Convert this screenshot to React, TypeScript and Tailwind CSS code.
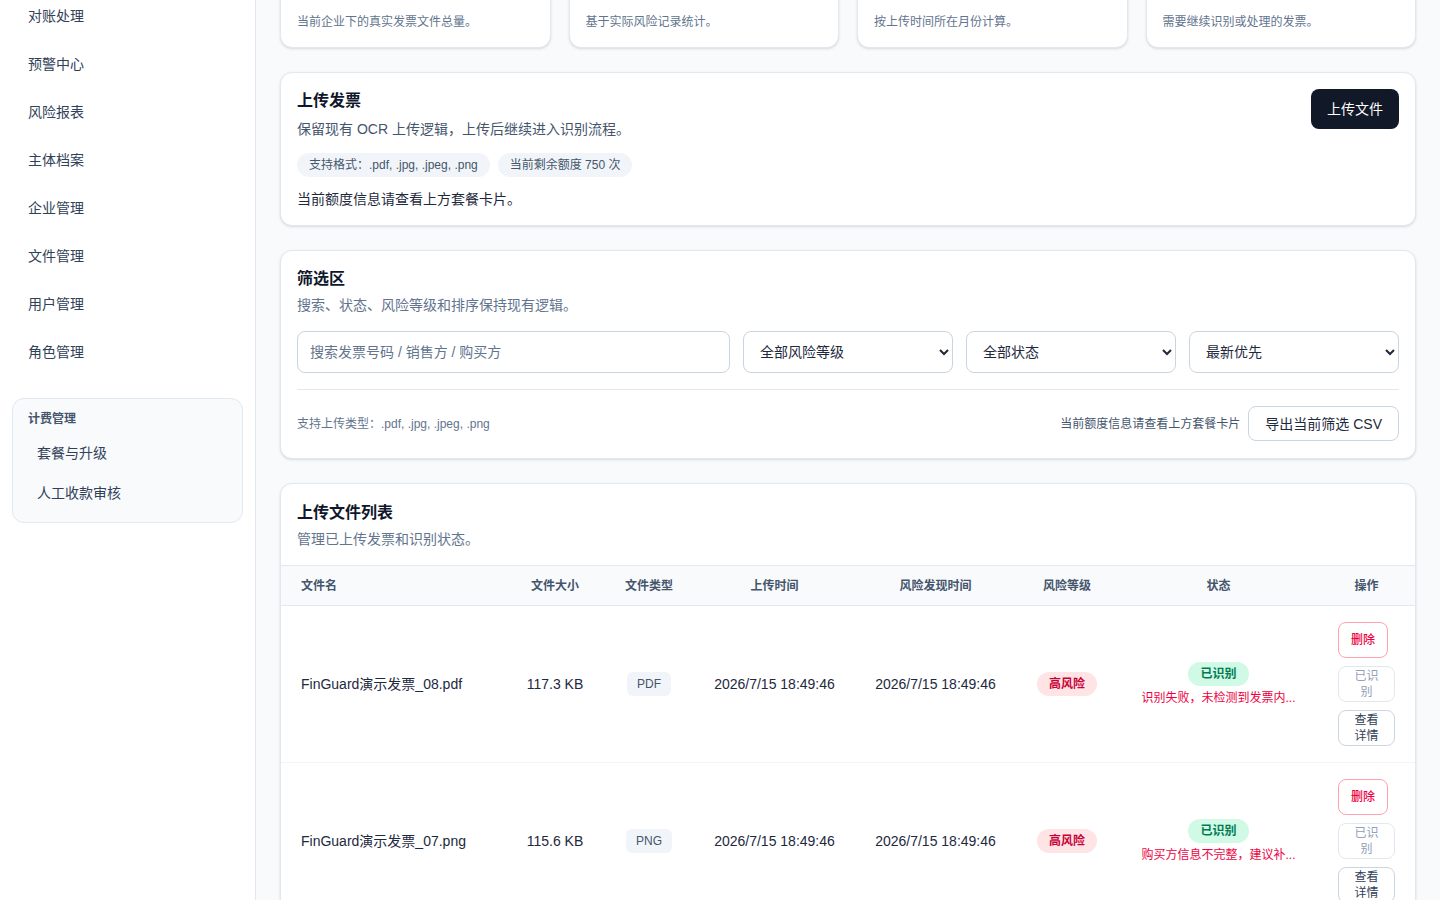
import { ReactNode } from "react";

const navItems = ["对账处理", "预警中心", "风险报表", "主体档案", "企业管理", "文件管理", "用户管理", "角色管理"];

const statNotes = ["当前企业下的真实发票文件总量。", "基于实际风险记录统计。", "按上传时间所在月份计算。", "需要继续识别或处理的发票。"];

const files = [
  { name: "FinGuard演示发票_08.pdf", size: "117.3 KB", type: "PDF", note: "识别失败，未检测到发票内..." },
  { name: "FinGuard演示发票_07.png", size: "115.6 KB", type: "PNG", note: "购买方信息不完整，建议补..." },
];

function Card({ children, className = "" }: { children: ReactNode; className?: string }) {
  return <div className={`rounded-xl border border-slate-200 bg-white shadow-sm ${className}`}>{children}</div>;
}

function Sidebar() {
  return (
    <aside className="w-[256px] shrink-0 border-r border-slate-200 bg-white px-3">
      <nav className="-mt-2 flex flex-col">
        {navItems.map((item) => (
          <a key={item} className="flex h-12 items-center px-4 text-sm text-slate-700">
            {item}
          </a>
        ))}
      </nav>
      <div className="mt-[22px] rounded-xl border border-slate-200 bg-slate-50 px-3 pt-3 pb-[9px]">
        <p className="px-[3px] text-xs leading-4 font-semibold text-slate-600">计费管理</p>
        <div className="mt-1.5 flex flex-col">
          <a className="flex h-10 items-center px-3 text-sm text-slate-700">套餐与升级</a>
          <a className="flex h-10 items-center px-3 text-sm text-slate-700">人工收款审核</a>
        </div>
      </div>
    </aside>
  );
}

function UploadCard() {
  return (
    <Card className="flex justify-between p-4">
      <div>
        <h2 className="text-base leading-6 font-semibold text-slate-900">上传发票</h2>
        <p className="mt-1.5 text-sm text-slate-600">保留现有 OCR 上传逻辑，上传后继续进入识别流程。</p>
        <div className="mt-3.5 flex gap-2">
          <span className="flex h-6 items-center rounded-full bg-slate-100 px-3 text-xs text-slate-600">支持格式：.pdf, .jpg, .jpeg, .png</span>
          <span className="flex h-6 items-center rounded-full bg-slate-100 px-3 text-xs text-slate-600">当前剩余额度 750 次</span>
        </div>
        <p className="mt-3 text-sm text-slate-800">当前额度信息请查看上方套餐卡片。</p>
      </div>
      <button className="h-10 rounded-lg bg-[#111827] px-4 text-sm text-white">上传文件</button>
    </Card>
  );
}

function FilterCard() {
  return (
    <Card className="px-4 pt-4 pb-[17px]">
      <h2 className="text-base leading-6 font-semibold text-slate-900">筛选区</h2>
      <p className="mt-1 text-sm text-slate-500">搜索、状态、风险等级和排序保持现有逻辑。</p>
      <div className="mt-4 grid grid-cols-[1fr_210px_210px_210px] gap-[13px]">
        <input
          className="h-[42px] rounded-lg border border-slate-300 px-3 text-sm text-slate-800 placeholder:text-slate-500"
          placeholder="搜索发票号码 / 销售方 / 购买方"
        />
        <select className="h-[42px] rounded-lg border border-slate-300 bg-white px-3 text-sm text-slate-800">
          <option>全部风险等级</option>
        </select>
        <select className="h-[42px] rounded-lg border border-slate-300 bg-white px-3 text-sm text-slate-800">
          <option>全部状态</option>
        </select>
        <select className="h-[42px] rounded-lg border border-slate-300 bg-white px-3 text-sm text-slate-800">
          <option>最新优先</option>
        </select>
      </div>
      <div className="mt-4 flex items-center justify-between border-t border-slate-200 pt-4">
        <span className="text-xs text-slate-500">支持上传类型：.pdf, .jpg, .jpeg, .png</span>
        <div className="flex items-center gap-2">
          <span className="text-xs text-slate-600">当前额度信息请查看上方套餐卡片</span>
          <button className="h-[35px] rounded-lg border border-slate-300 bg-white px-4 text-sm text-slate-800">导出当前筛选 CSV</button>
        </div>
      </div>
    </Card>
  );
}

function FileTable() {
  return (
    <Card className="overflow-hidden">
      <div className="px-4 pt-[17px] pb-4">
        <h2 className="text-base leading-6 font-semibold text-slate-900">上传文件列表</h2>
        <p className="mt-1 text-sm text-slate-500">管理已上传发票和识别状态。</p>
      </div>
      <table className="w-full table-fixed border-collapse">
        <colgroup>
          <col className="w-[224px]" />
          <col className="w-[100px]" />
          <col className="w-[88px]" />
          <col className="w-[163px]" />
          <col className="w-[159px]" />
          <col className="w-[104px]" />
          <col className="w-[199px]" />
          <col className="w-[97px]" />
        </colgroup>
        <thead>
          <tr className="h-10 border-y border-slate-200 bg-slate-50 text-xs font-semibold text-slate-600">
            <th className="px-5 text-left font-semibold">文件名</th>
            <th className="font-semibold">文件大小</th>
            <th className="font-semibold">文件类型</th>
            <th className="font-semibold">上传时间</th>
            <th className="font-semibold">风险发现时间</th>
            <th className="font-semibold">风险等级</th>
            <th className="font-semibold">状态</th>
            <th className="px-5 font-semibold">操作</th>
          </tr>
        </thead>
        <tbody className="text-sm text-slate-800">
          {files.map((f) => (
            <tr key={f.name} className="border-b border-slate-100">
              <td className="px-5 py-4">{f.name}</td>
              <td className="text-center">{f.size}</td>
              <td className="text-center">
                <span className="inline-flex h-6 items-center rounded-md bg-slate-100 px-2.5 text-xs text-slate-600">{f.type}</span>
              </td>
              <td className="text-center">2026/7/15 18:49:46</td>
              <td className="text-center">2026/7/15 18:49:46</td>
              <td className="text-center">
                <span className="inline-flex h-6 items-center rounded-full bg-rose-100 px-3 text-xs font-semibold text-rose-700">高风险</span>
              </td>
              <td className="text-center">
                <div className="flex flex-col items-center">
                  <span className="inline-flex h-6 items-center rounded-full bg-emerald-100 px-3 text-xs font-semibold text-emerald-700">已识别</span>
                  <span className="mt-1 text-xs leading-4 text-rose-600">{f.note}</span>
                </div>
              </td>
              <td className="px-5 py-4">
                <div className="flex flex-col items-start gap-2">
                  <button className="flex h-9 items-center justify-center rounded-lg border border-rose-300 bg-white px-3 text-xs leading-4 font-medium text-rose-600">删除</button>
                  <button className="flex h-9 items-center justify-center rounded-lg border border-slate-200 bg-white px-3 text-xs leading-4 text-slate-400">已识别</button>
                  <button className="flex h-9 items-center justify-center rounded-lg border border-slate-300 bg-white px-3 text-xs leading-4 text-slate-700">查看详情</button>
                </div>
              </td>
            </tr>
          ))}
        </tbody>
      </table>
    </Card>
  );
}

export default function App() {
  return (
    <div className="flex h-screen overflow-hidden bg-slate-50 font-['Liberation_Sans','Noto_Sans_CJK_SC',sans-serif]">
      <Sidebar />
      <main className="flex-1 pr-[26px] pl-6">
        <div className="-mt-[52px] flex flex-col gap-6">
          <div className="grid grid-cols-4 gap-[18px]">
            {statNotes.map((note) => (
              <Card key={note} className="flex h-[100px] items-end px-4 pb-[15px]">
                <p className="text-xs leading-5 text-slate-500">{note}</p>
              </Card>
            ))}
          </div>
          <UploadCard />
          <FilterCard />
          <FileTable />
        </div>
      </main>
    </div>
  );
}
